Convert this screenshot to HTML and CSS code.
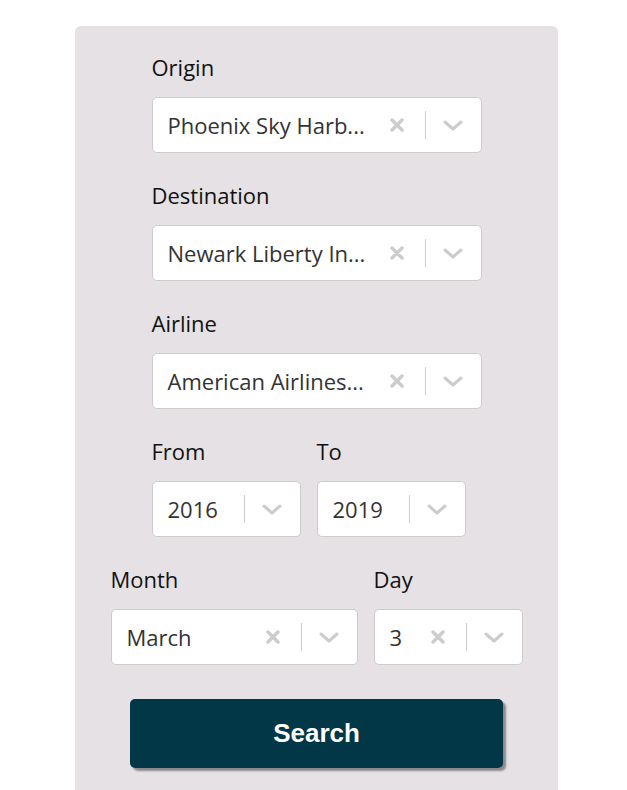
FILE: index.html
```html
<!DOCTYPE html>
<html lang="en">
<head>
<meta charset="utf-8">
<title>Flight search</title>
<link rel="stylesheet" href="styles.css">
</head>
<body>
<form class="panel">
  <div class="column">
    <div class="field">
      <label class="label">Origin</label>
      <div class="select" title="Phoenix Sky Harbor International Airport">
        <div class="value">Phoenix Sky Harb...</div>
        <div class="clear"><svg width="14" height="14" viewBox="0 0 14 14"><path d="M2 2 L12 12 M12 2 L2 12"/></svg></div>
        <span class="sep"></span>
        <div class="drop"><svg width="20" height="11" viewBox="0 0 20 11"><path d="M2 2 L10 9 L18 2"/></svg></div>
      </div>
    </div>
    <div class="field">
      <label class="label">Destination</label>
      <div class="select" title="Newark Liberty International Airport">
        <div class="value">Newark Liberty In...</div>
        <div class="clear"><svg width="14" height="14" viewBox="0 0 14 14"><path d="M2 2 L12 12 M12 2 L2 12"/></svg></div>
        <span class="sep"></span>
        <div class="drop"><svg width="20" height="11" viewBox="0 0 20 11"><path d="M2 2 L10 9 L18 2"/></svg></div>
      </div>
    </div>
    <div class="field">
      <label class="label">Airline</label>
      <div class="select" title="American Airlines Inc.">
        <div class="value">American Airlines...</div>
        <div class="clear"><svg width="14" height="14" viewBox="0 0 14 14"><path d="M2 2 L12 12 M12 2 L2 12"/></svg></div>
        <span class="sep"></span>
        <div class="drop"><svg width="20" height="11" viewBox="0 0 20 11"><path d="M2 2 L10 9 L18 2"/></svg></div>
      </div>
    </div>
    <div class="row">
      <div class="field small">
        <label class="label">From</label>
        <div class="select">
          <div class="value">2016</div>
          <span class="sep"></span>
          <div class="drop"><svg width="20" height="11" viewBox="0 0 20 11"><path d="M2 2 L10 9 L18 2"/></svg></div>
        </div>
      </div>
      <div class="field small">
        <label class="label">To</label>
        <div class="select">
          <div class="value">2019</div>
          <span class="sep"></span>
          <div class="drop"><svg width="20" height="11" viewBox="0 0 20 11"><path d="M2 2 L10 9 L18 2"/></svg></div>
        </div>
      </div>
    </div>
  </div>
  <div class="row wide">
    <div class="field month">
      <label class="label">Month</label>
      <div class="select">
        <div class="value">March</div>
        <div class="clear"><svg width="14" height="14" viewBox="0 0 14 14"><path d="M2 2 L12 12 M12 2 L2 12"/></svg></div>
        <span class="sep"></span>
        <div class="drop"><svg width="20" height="11" viewBox="0 0 20 11"><path d="M2 2 L10 9 L18 2"/></svg></div>
      </div>
    </div>
    <div class="field small">
      <label class="label">Day</label>
      <div class="select">
        <div class="value">3</div>
        <div class="clear"><svg width="14" height="14" viewBox="0 0 14 14"><path d="M2 2 L12 12 M12 2 L2 12"/></svg></div>
        <span class="sep"></span>
        <div class="drop"><svg width="20" height="11" viewBox="0 0 20 11"><path d="M2 2 L10 9 L18 2"/></svg></div>
      </div>
    </div>
  </div>
  <button type="button" class="search">Search</button>
</form>
</body>
</html>
```

FILE: styles.css
```css
html, body {
  margin: 0;
  padding: 0;
  background: #ffffff;
}

body {
  font-family: "Open Sans", "Noto Sans", sans-serif;
  font-size: 22px;
  color: #111;
}

.panel {
  box-sizing: border-box;
  width: 483px;
  margin: 26px 0 0 75px;
  padding: 26px 0 40px;
  background: #e6e1e5;
  border-radius: 6px 6px 0 0;
  display: flex;
  flex-direction: column;
  align-items: center;
  gap: 27px;
}

.column {
  width: 330px;
  display: flex;
  flex-direction: column;
  gap: 27px;
}

.field {
  display: flex;
  flex-direction: column;
}

.label {
  display: block;
  line-height: 30px;
  height: 30px;
  margin-bottom: 15px;
  color: #111;
}

.select {
  box-sizing: border-box;
  height: 56px;
  background: #fff;
  border: 1px solid #cccccc;
  border-radius: 5px;
  display: flex;
  align-items: center;
}

.value {
  flex: 1;
  min-width: 0;
  padding-left: 15px;
  color: #333;
  white-space: nowrap;
  line-height: 30px;
}

.clear {
  width: 56px;
  flex: none;
  display: flex;
  justify-content: center;
  align-items: center;
}

.clear svg path {
  fill: none;
  stroke: #cccccc;
  stroke-width: 3.4;
  stroke-linecap: round;
}

.sep {
  flex: none;
  width: 1px;
  align-self: stretch;
  margin: 13px 0;
  background: #cccccc;
}

.drop {
  width: 55px;
  flex: none;
  display: flex;
  justify-content: center;
  align-items: center;
}

.drop svg path {
  fill: none;
  stroke: #cccccc;
  stroke-width: 3;
  stroke-linecap: round;
  stroke-linejoin: round;
}

.row {
  display: flex;
  gap: 16px;
}

.small {
  width: 149px;
}

.wide {
  width: 412px;
}

.month {
  width: 247px;
}

.search {
  margin-top: 7px;
  width: 373px;
  height: 69px;
  border: none;
  border-radius: 5px;
  background: #023747;
  color: #fff;
  font-family: "Liberation Sans", Arial, sans-serif;
  font-weight: bold;
  font-size: 26px;
  box-shadow: 3px 3px 2px #8a8a8a;
  cursor: pointer;
}
```
